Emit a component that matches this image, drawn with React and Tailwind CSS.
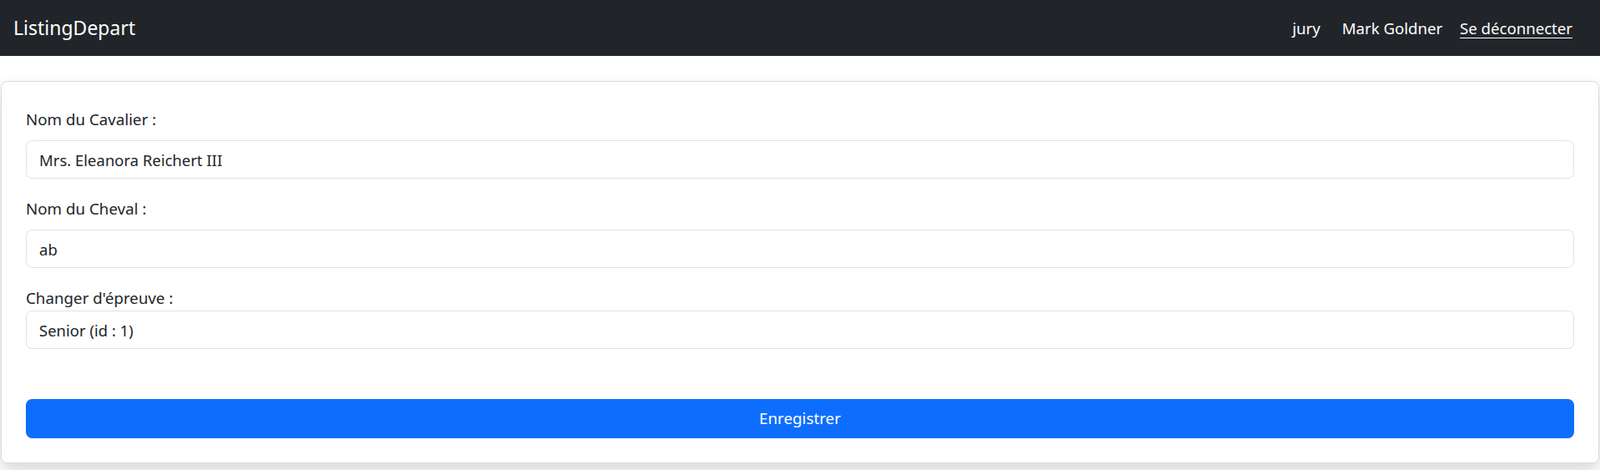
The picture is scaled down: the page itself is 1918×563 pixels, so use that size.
import React, { useState } from "react";

const font = { fontFamily: '"Segoe UI", "Noto Sans", "Liberation Sans", sans-serif' };

function Field({ label, value, onChange, spaced = true, last = false }) {
  return (
    <div className={last ? "" : "mb-[21px]"}>
      <label className={`block h-[30px] leading-[30px] text-[18.75px] text-[#212529] ${spaced ? "mb-[10px]" : ""}`}>
        {label}
      </label>
      <input
        value={value}
        onChange={onChange}
        className="block w-full h-[46px] px-[15px] text-[18.5px] text-[#212529] bg-white border border-[#dee2e6] rounded-[7.5px] outline-none"
      />
    </div>
  );
}

export default function App() {
  const [form, setForm] = useState({
    cavalier: "Mrs. Eleanora Reichert III",
    cheval: "ab",
    epreuve: "Senior (id : 1)",
  });

  function handleInput(name) {
    return (e) => setForm({ ...form, [name]: e.target.value });
  }

  return (
    <div style={font} className="w-[1918px] h-[563px] bg-white overflow-hidden">
      <nav className="h-[67px] bg-[#212529] flex items-center justify-between pl-[16px] pr-[33px]">
        <a className="text-white text-[23px] leading-none">ListingDepart</a>
        <div className="flex items-center text-[18.6px] text-white">
          <span className="mr-[26px]">jury</span>
          <span className="mr-[21px]">Mark Goldner</span>
          <a className="underline underline-offset-[4px]">Se déconnecter</a>
        </div>
      </nav>

      <div className="pt-[30px] px-[1px]">
        <div className="border border-[#d9dadb] rounded-[7.5px] bg-white shadow-[0_10px_20px_rgba(0,0,0,0.15)] px-[29px] pt-[30px] pb-[29px]">
          <Field label="Nom du Cavalier :" value={form.cavalier} onChange={handleInput("cavalier")} />
          <Field label="Nom du Cheval :" value={form.cheval} onChange={handleInput("cheval")} />
          <Field label="Changer d'épreuve :" value={form.epreuve} onChange={handleInput("epreuve")} spaced={false} last />
          <button className="mt-[60px] w-full h-[47px] rounded-[7.5px] bg-[#0d6efd] text-white text-[18.75px]">
            Enregistrer
          </button>
        </div>
      </div>
    </div>
  );
}
